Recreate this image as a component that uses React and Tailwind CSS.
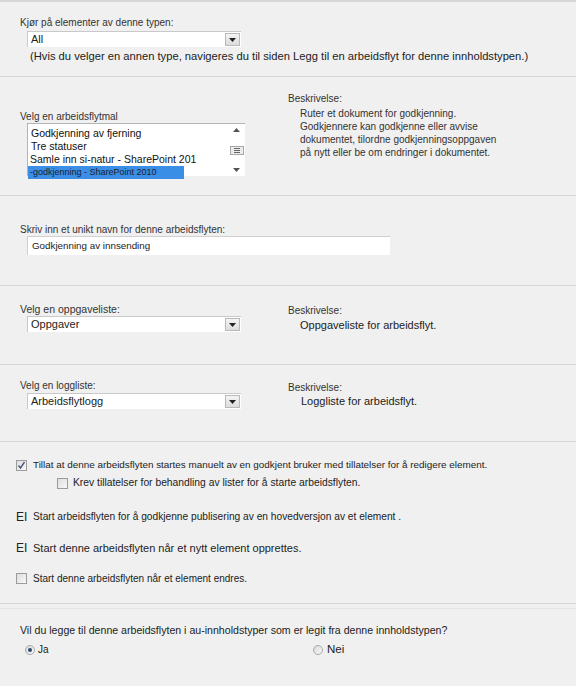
import React from 'react'

const font = { fontFamily: '"Liberation Sans", Arial, sans-serif' }

function Select({ value }) {
  return (
    <div className="ml-[7px] flex h-[16px] w-[214px] items-stretch border-l border-t border-[#c9c9c9] bg-white">
      <div className="flex flex-1 items-center pl-[3px] text-[11px] text-[#222]">{value}</div>
      <div className="my-[1px] mr-[1px] flex w-[15px] items-center justify-center border border-[#b9b9b9] bg-gradient-to-b from-[#f4f4f4] to-[#dcdcdc]">
        <svg width="7" height="4" viewBox="0 0 7 4">
          <path d="M0 0h7L3.5 4z" fill="#222" />
        </svg>
      </div>
    </div>
  )
}

function Checkbox({ checked }) {
  return (
    <div className="flex h-[11px] w-[11px] shrink-0 items-center justify-center border border-[#9a9b9b] bg-gradient-to-br from-[#dedede] to-[#f8f8f8]">
      {checked && (
        <svg width="9" height="9" viewBox="0 0 9 9">
          <path d="M1.5 4.5l2 2.5 4-6" fill="none" stroke="#4a5a7a" strokeWidth="1.4" />
        </svg>
      )}
    </div>
  )
}

function Radio({ checked }) {
  return (
    <div className="flex h-[10px] w-[10px] shrink-0 items-center justify-center rounded-full border border-[#a8a8a8] bg-gradient-to-br from-[#d8d8d8] to-[#fafafa]">
      {checked && <div className="h-[4px] w-[4px] rounded-full bg-[#2b4a70]" />}
    </div>
  )
}

function Desc({ children }) {
  return <div className="text-[10px] leading-[13px] text-[#333]">{children}</div>
}

export default function App() {
  return (
    <div className="w-[576px] bg-[#f0f0f0] text-[#333]" style={font}>
      {/* type */}
      <div className="h-[77px] border-b border-t-2 border-[#d6d6d6] pl-[20px] pt-[14px]">
        <div className="text-[10px] leading-[13px]">Kjør på elementer av denne typen:</div>
        <div className="mt-[2px]">
          <Select value="All" />
        </div>
        <div className="mt-[3px] pl-[10px] text-[11.2px] leading-[13px] text-[#222]">
          (Hvis du velger en annen type, navigeres du til siden Legg til en arbeidsflyt for denne innholdstypen.)
        </div>
      </div>

      {/* template */}
      <div className="flex h-[119px] border-b border-[#d6d6d6]">
        <div className="w-[288px] pl-[20px] pt-[34px]">
          <div className="text-[10px] leading-[12px]">Velg en arbeidsflytmal</div>
          <div className="ml-[7px] flex h-[53px] w-[218px] border-l border-t border-[#b4b4b4] bg-white">
            <div className="flex-1 pt-[3px] text-[10.5px] leading-[13px] text-[#111]">
              <div className="pl-[3px]">Godkjenning av fjerning</div>
              <div className="pl-[3px]">Tre statuser</div>
              <div className="pl-[2px]">Samle inn si-natur - SharePoint 201</div>
              <div className="w-[156px] bg-[#3b8ee6] pl-[2px] text-[9px] text-[#1a2230]">
                -godkjenning - SharePoint 2010
              </div>
            </div>
            <div className="flex w-[17px] flex-col items-center justify-between py-[4px]">
              <svg width="7" height="4" viewBox="0 0 7 4">
                <path d="M0 4h7L3.5 0z" fill="#555" />
              </svg>
              <div className="flex h-[9px] w-[14px] flex-col justify-center gap-[1px] border border-[#a8a8a8] bg-[#ececec] px-[3px]">
                <div className="h-px bg-[#666]" />
                <div className="h-px bg-[#666]" />
                <div className="h-px bg-[#666]" />
              </div>
              <svg width="7" height="4" viewBox="0 0 7 4">
                <path d="M0 0h7L3.5 4z" fill="#555" />
              </svg>
            </div>
          </div>
        </div>
        <div className="pt-[15px]">
          <div className="text-[10px] leading-[13px]">Beskrivelse:</div>
          <div className="mt-[2px] pl-[12px]">
            <Desc>Ruter et dokument for godkjenning.</Desc>
            <Desc>Godkjennere kan godkjenne eller avvise</Desc>
            <Desc>dokumentet, tilordne godkjenningsoppgaven</Desc>
            <Desc>på nytt eller be om endringer i dokumentet.</Desc>
          </div>
        </div>
      </div>

      {/* name */}
      <div className="h-[90px] border-b border-[#d6d6d6] pl-[20px] pt-[28px]">
        <div className="text-[10px] leading-[12px]">Skriv inn et unikt navn for denne arbeidsflyten:</div>
        <div className="ml-[7px] flex h-[19px] w-[363px] items-center border-l border-t border-[#d0d0d0] bg-white pl-[4px] text-[9.8px] text-[#222]">
          Godkjenning av innsending
        </div>
      </div>

      {/* task list */}
      <div className="flex h-[79px] border-b border-[#d6d6d6]">
        <div className="w-[288px] pl-[20px] pt-[17px]">
          <div className="text-[10.5px] leading-[13px]">Velg en oppgaveliste:</div>
          <Select value="Oppgaver" />
        </div>
        <div className="pt-[18px]">
          <div className="text-[10px] leading-[13px]">Beskrivelse:</div>
          <div className="mt-[1px] pl-[12px] text-[11px] leading-[14px] text-[#222]">Oppgaveliste for arbeidsflyt.</div>
        </div>
      </div>

      {/* history list */}
      <div className="flex h-[77px] border-b border-[#d6d6d6]">
        <div className="w-[288px] pl-[20px] pt-[14px]">
          <div className="text-[10px] leading-[13px]">Velg en loggliste:</div>
          <div className="mt-[1px]">
            <Select value="Arbeidsflytlogg" />
          </div>
        </div>
        <div className="pt-[16px]">
          <div className="text-[10px] leading-[13px]">Beskrivelse:</div>
          <div className="pl-[13px] text-[11px] leading-[14px] text-[#222]">Loggliste for arbeidsflyt.</div>
        </div>
      </div>

      {/* start options */}
      <div className="h-[162px] border-b border-[#d6d6d6] pl-[16px] pt-[16px]">
        <div className="flex h-[14px] items-center gap-[6px]">
          <Checkbox checked />
          <span className="text-[9.9px] text-[#222]">
            Tillat at denne arbeidsflyten startes manuelt av en godkjent bruker med tillatelser for å redigere element.
          </span>
        </div>
        <div className="mt-[4px] flex h-[14px] items-center gap-[5px] pl-[41px]">
          <Checkbox />
          <span className="text-[10.3px] text-[#222]">
            Krev tillatelser for behandling av lister for å starte arbeidsflyten.
          </span>
        </div>
        <div className="mt-[20px] flex h-[14px] items-center gap-[5px]">
          <span className="w-[12px] text-[12px] text-[#222]">EI</span>
          <span className="text-[10.2px] text-[#222]">
            Start arbeidsflyten for å godkjenne publisering av en hovedversjon av et element .
          </span>
        </div>
        <div className="mt-[17px] flex h-[14px] items-center gap-[5px]">
          <span className="w-[12px] text-[12px] text-[#222]">EI</span>
          <span className="text-[11px] text-[#222]">Start denne arbeidsflyten når et nytt element opprettes.</span>
        </div>
        <div className="mt-[16px] flex h-[14px] items-center gap-[6px]">
          <Checkbox />
          <span className="text-[10px] text-[#222]">Start denne arbeidsflyten når et element endres.</span>
        </div>
      </div>

      {/* child types */}
      <div className="h-[81px] border-b border-[#cfcfcf]">
        <div className="mt-[4px] h-px bg-[#e4e4e4]" />
        <div className="pl-[20px] pt-[15px]">
          <div className="text-[10.6px] leading-[13px] text-[#222]">
            Vil du legge til denne arbeidsflyten i au-innholdstyper som er legit fra denne innholdstypen?
          </div>
          <div className="mt-[4px] flex items-center">
            <div className="flex w-[293px] items-center gap-[3px] pl-[5px]">
              <Radio checked />
              <span className="text-[10px] text-[#222]">Ja</span>
            </div>
            <div className="flex items-center gap-[4px]">
              <Radio />
              <span className="text-[11.5px] text-[#222]">Nei</span>
            </div>
          </div>
        </div>
      </div>
      <div className="h-[3px] bg-[#f4f4f4]" />
    </div>
  )
}
